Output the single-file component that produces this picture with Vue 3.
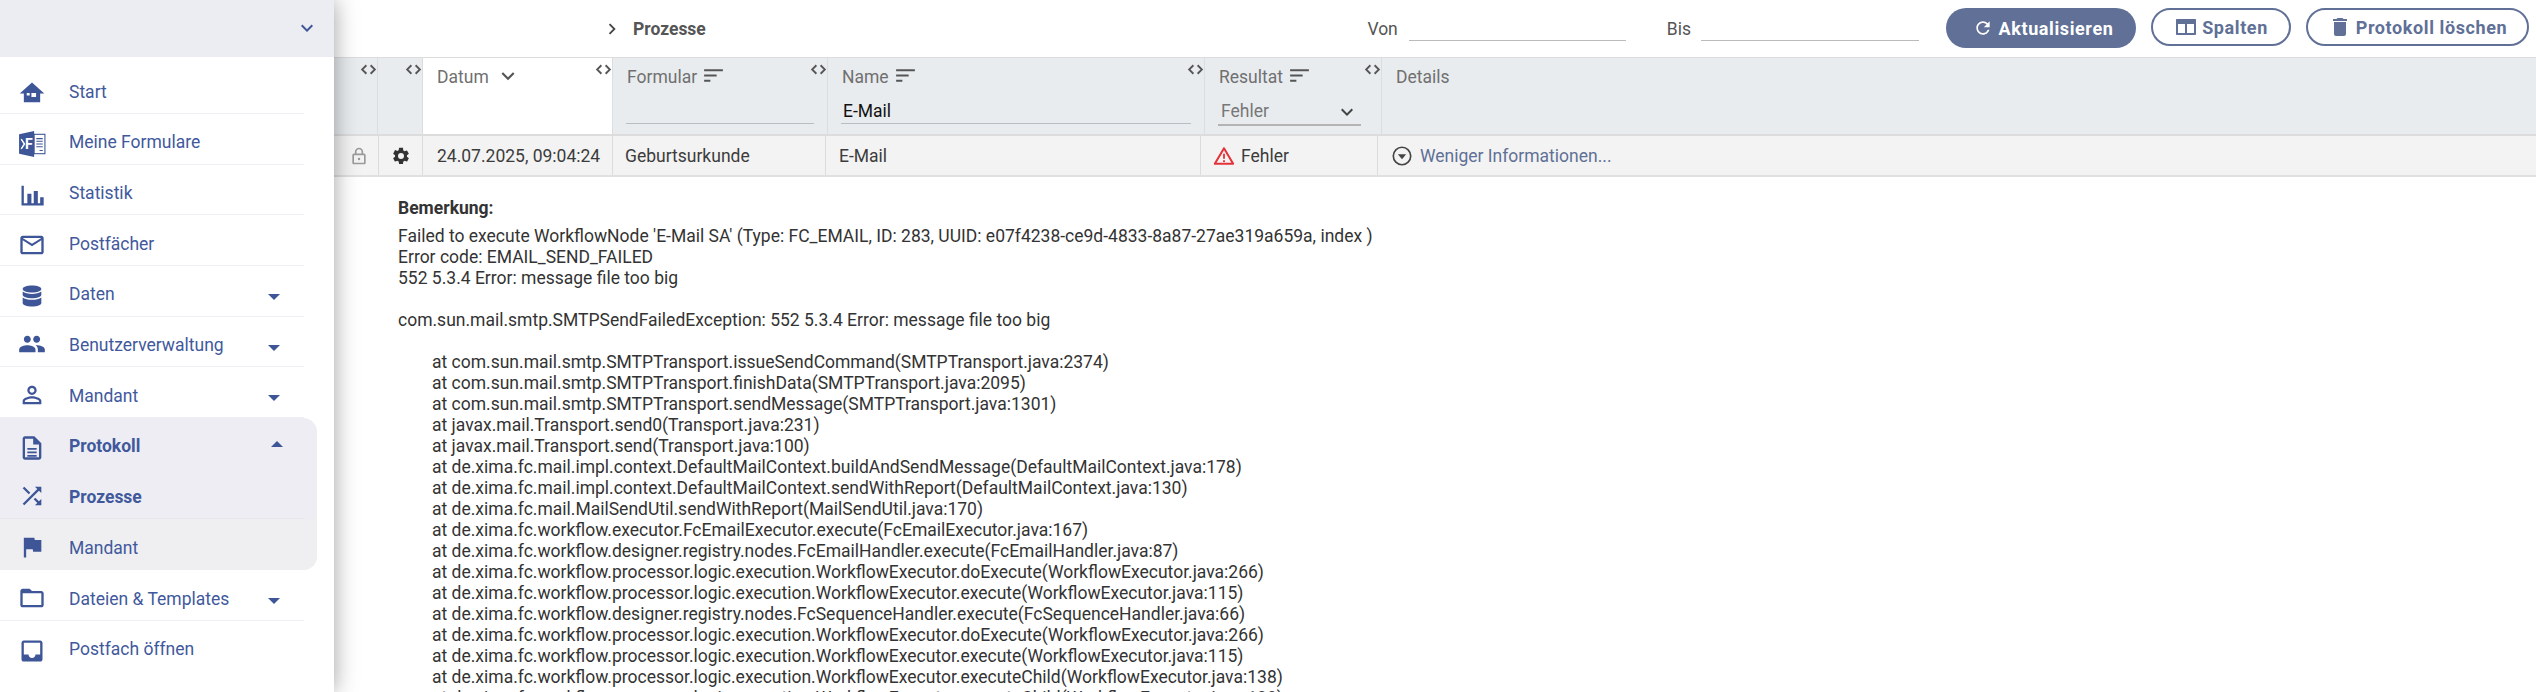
<script setup>
const P = {
  home: 'M12 3 1.500 12.500H5V20h5.200v-5.800H7.500V12h0H10v2.200h.2V20H19v-7.500h3.500zM11.500 12h4v3.500h-4z',
  chart: 'M3 4h2v17H3zM8 11h3.500v8H8zM13.500 8.500H17V19h-3.500zM19 14h3v5h-3zM3 19h19v2H3z',
  mail: 'M20 4H4c-1.100 0-2 .9-2 2v12c0 1.100.9 2 2 2h16c1.100 0 2-.9 2-2V6c0-1.100-.9-2-2-2zm0 14H4V8l8 5 8-5v10zm-8-7L4 6h16l-8 5z',
  db: 'M12 3c-4.400 0-8 1.300-8 3s3.600 3 8 3 8-1.300 8-3-3.600-3-8-3zM4 8.200V11c0 1.700 3.600 3 8 3s8-1.300 8-3V8.200c-1.700 1.400-4.800 2.100-8 2.100s-6.300-.7-8-2.100zM4 13.200V18c0 1.700 3.600 3 8 3s8-1.300 8-3v-4.800c-1.700 1.400-4.800 2.100-8 2.100s-6.300-.7-8-2.100z',
  people: 'M16 11c1.660 0 2.990-1.340 2.990-3S17.660 5 16 5c-1.660 0-3 1.340-3 3s1.340 3 3 3zm-8 0c1.660 0 2.990-1.340 2.990-3S9.660 5 8 5C6.340 5 5 6.340 5 8s1.340 3 3 3zm0 2c-2.330 0-7 1.170-7 3.500V19h14v-2.500c0-2.330-4.670-3.500-7-3.500zm8 0c-.29 0-.62.02-.97.05 1.160.84 1.970 1.970 1.970 3.450V19h6v-2.500c0-2.330-4.670-3.500-7-3.500z',
  person: 'M12 5.900c1.160 0 2.100.94 2.100 2.100s-.94 2.100-2.100 2.100S9.900 9.160 9.900 8s.94-2.100 2.100-2.100m0 9c2.970 0 6.100 1.460 6.100 2.100v1.100H5.900V17c0-.64 3.130-2.100 6.100-2.100M12 4C9.790 4 8 5.790 8 8s1.790 4 4 4 4-1.790 4-4-1.790-4-4-4zm0 9c-2.670 0-8 1.340-8 4v3h16v-3c0-2.660-5.330-4-8-4z',
  doc: 'M14 2H6c-1.100 0-2 .9-2 2v16c0 1.100.9 2 2 2h12c1.100 0 2-.9 2-2V8zm4 18H6V4h7v5h5zM8 12h8v1.500H8zM8 15h8v1.500H8zM8 18h8v1.500H8z',
  shuffle: 'M10.590 9.170 5.410 4 4 5.410l5.170 5.170 1.420-1.410zM14.500 4l2.040 2.040L4 18.590 5.410 20 17.960 7.460 20 9.500V4h-5.500zm.33 9.410-1.410 1.410 3.130 3.130L14.500 20H20v-5.500l-2.040 2.040-3.130-3.130z',
  flag: 'M14.400 6 14 4H5v17h2v-7h5.600l.4 2h7V6z',
  folder: 'M20 6h-8l-2-2H4c-1.100 0-1.990.9-1.990 2L2 18c0 1.100.9 2 2 2h16c1.100 0 2-.9 2-2V8c0-1.100-.9-2-2-2zm0 12H4V8h16v10z',
  inbox: 'M19 3H4.990c-1.110 0-1.980.89-1.980 2L3 19c0 1.100.88 2 1.990 2H19c1.100 0 2-.9 2-2V5c0-1.110-.9-2-2-2zm0 12h-4c0 1.660-1.350 3-3 3s-3-1.340-3-3H4.990V5H19v10z',
}
const topNav = [
  { label: 'Start', icon: P.home, low: true },
  { label: 'Meine Formulare', xima: true, low: true },
  { label: 'Statistik', icon: P.chart, low: true },
  { label: 'Postfächer', icon: P.mail, low: true },
  { label: 'Daten', icon: P.db, caret: true, low: true },
  { label: 'Benutzerverwaltung', icon: P.people, caret: true },
  { label: 'Mandant', icon: P.person, caret: true },
]
const bottomNav = [
  { label: 'Dateien & Templates', icon: P.folder, caret: true },
  { label: 'Postfach öffnen', icon: P.inbox, plain: true, low: true },
]
const chevron = 'M7.410 8.590 12 13.170l4.590-4.580L18 10l-6 6-6-6z'
const sortIcon = 'M3 18h6v-2H3zM3 6v2h18V6zm0 7h12v-2H3z'
const intro = [
  "Failed to execute WorkflowNode 'E-Mail SA' (Type: FC_EMAIL, ID: 283, UUID: e07f4238-ce9d-4833-8a87-27ae319a659a, index )",
  'Error code: EMAIL_SEND_FAILED',
  '552 5.3.4 Error: message file too big',
]
const stack = [
  'at com.sun.mail.smtp.SMTPTransport.issueSendCommand(SMTPTransport.java:2374)',
  'at com.sun.mail.smtp.SMTPTransport.finishData(SMTPTransport.java:2095)',
  'at com.sun.mail.smtp.SMTPTransport.sendMessage(SMTPTransport.java:1301)',
  'at javax.mail.Transport.send0(Transport.java:231)',
  'at javax.mail.Transport.send(Transport.java:100)',
  'at de.xima.fc.mail.impl.context.DefaultMailContext.buildAndSendMessage(DefaultMailContext.java:178)',
  'at de.xima.fc.mail.impl.context.DefaultMailContext.sendWithReport(DefaultMailContext.java:130)',
  'at de.xima.fc.mail.MailSendUtil.sendWithReport(MailSendUtil.java:170)',
  'at de.xima.fc.workflow.executor.FcEmailExecutor.execute(FcEmailExecutor.java:167)',
  'at de.xima.fc.workflow.designer.registry.nodes.FcEmailHandler.execute(FcEmailHandler.java:87)',
  'at de.xima.fc.workflow.processor.logic.execution.WorkflowExecutor.doExecute(WorkflowExecutor.java:266)',
  'at de.xima.fc.workflow.processor.logic.execution.WorkflowExecutor.execute(WorkflowExecutor.java:115)',
  'at de.xima.fc.workflow.designer.registry.nodes.FcSequenceHandler.execute(FcSequenceHandler.java:66)',
  'at de.xima.fc.workflow.processor.logic.execution.WorkflowExecutor.doExecute(WorkflowExecutor.java:266)',
  'at de.xima.fc.workflow.processor.logic.execution.WorkflowExecutor.execute(WorkflowExecutor.java:115)',
  'at de.xima.fc.workflow.processor.logic.execution.WorkflowExecutor.executeChild(WorkflowExecutor.java:138)',
  'at de.xima.fc.workflow.processor.logic.execution.WorkflowExecutor.executeChild(WorkflowExecutor.java:138)',
]
</script>

<template>
  <div class="page">
    <aside class="side">
      <div class="side-head">
        <svg class="head-chev" viewBox="0 0 24 24"><path :d="chevron" /></svg>
      </div>
      <nav class="nav">
        <a v-for="n in topNav" :key="n.label" class="item">
          <span class="ico" :class="{ low: n.low }">
            <svg v-if="n.xima" viewBox="0 0 26 26" class="xima">
              <path d="M1 4 15 1v24L1 22z" />
              <rect x="15" y="4" width="10" height="18" class="xb" />
              <path d="M17 8h6M17 10.500h6M17 13h6M17 15.500h6M20 19h3" class="xl" />
              <path d="M3 8.500 6 13 3 17.500" class="xw" />
              <text x="6.500" y="18" class="xt">F</text>
            </svg>
            <svg v-else viewBox="0 0 24 24"><path :d="n.icon" /></svg>
          </span>
          <span class="lbl">{{ n.label }}</span>
          <i v-if="n.caret" class="caret"></i>
        </a>
        <div class="group">
          <a class="item g1">
            <span class="ico low"><svg viewBox="0 0 24 24"><path :d="P.doc" /></svg></span>
            <span class="lbl strong">Protokoll</span>
            <i class="caret up"></i>
          </a>
          <a class="item g2">
            <span class="ico"><svg viewBox="0 0 24 24"><path :d="P.shuffle" /></svg></span>
            <span class="lbl strong">Prozesse</span>
          </a>
          <a class="item g3">
            <span class="ico"><svg viewBox="0 0 24 24"><path :d="P.flag" /></svg></span>
            <span class="lbl">Mandant</span>
          </a>
        </div>
        <a v-for="n in bottomNav" :key="n.label" class="item" :class="{ last: n.plain }">
          <span class="ico" :class="{ low: n.low }"><svg viewBox="0 0 24 24"><path :d="n.icon" /></svg></span>
          <span class="lbl">{{ n.label }}</span>
          <i v-if="n.caret" class="caret"></i>
        </a>
      </nav>
    </aside>

    <main class="main">
      <header class="top">
        <div class="crumb">
          <svg viewBox="0 0 24 24"><path d="M8.590 7.410 13.170 12l-4.580 4.590L10 18l6-6-6-6z" /></svg>
          <span>Prozesse</span>
        </div>
        <div class="dates">
          <span class="d-l">Von</span><span class="d-in first"></span>
          <span class="d-l bis">Bis</span><span class="d-in second"></span>
        </div>
        <div class="btns">
          <button class="btn fill">
            <svg viewBox="0 0 24 24"><path d="M17.650 6.350C16.200 4.900 14.210 4 12 4c-4.420 0-7.990 3.580-7.990 8s3.570 8 7.990 8c3.730 0 6.840-2.550 7.730-6h-2.080c-.82 2.330-3.040 4-5.650 4-3.310 0-6-2.690-6-6s2.690-6 6-6c1.660 0 3.140.69 4.220 1.780L13 11h7V4l-2.350 2.350z" /></svg>
            Aktualisieren
          </button>
          <button class="btn line spalten">
            <svg viewBox="0 0 24 24"><path d="M3 4h18c.6 0 1 .4 1 1v14c0 .6-.4 1-1 1H3c-.6 0-1-.4-1-1V5c0-.6.4-1 1-1zm1 5v9h7V9zm9 0v9h7V9z" /></svg>
            Spalten
          </button>
          <button class="btn line proto">
            <svg viewBox="0 0 24 24"><path d="M6 19c0 1.100.9 2 2 2h8c1.100 0 2-.9 2-2V7H6zM19 4h-3.500l-1-1h-5l-1 1H5v2h14z" /></svg>
            Protokoll löschen
          </button>
        </div>
      </header>

      <section class="thead">
        <div class="th c1"><svg class="rz" viewBox="0 0 16 12"><path d="M6 2 2 6l4 4M10 2l4 4-4 4" /></svg></div>
        <div class="th c2"><svg class="rz" viewBox="0 0 16 12"><path d="M6 2 2 6l4 4M10 2l4 4-4 4" /></svg></div>
        <div class="th c3 sorted">
          <div class="ttl">Datum <svg class="chv" viewBox="0 0 24 24"><path :d="chevron" /></svg></div>
          <svg class="rz" viewBox="0 0 16 12"><path d="M6 2 2 6l4 4M10 2l4 4-4 4" /></svg>
        </div>
        <div class="th c4">
          <div class="ttl">Formular <svg class="srt" viewBox="0 0 24 24"><path :d="sortIcon" /></svg></div>
          <div class="inp"></div>
          <svg class="rz" viewBox="0 0 16 12"><path d="M6 2 2 6l4 4M10 2l4 4-4 4" /></svg>
        </div>
        <div class="th c5">
          <div class="ttl">Name <svg class="srt" viewBox="0 0 24 24"><path :d="sortIcon" /></svg></div>
          <div class="inp email">E-Mail</div>
          <svg class="rz" viewBox="0 0 16 12"><path d="M6 2 2 6l4 4M10 2l4 4-4 4" /></svg>
        </div>
        <div class="th c6">
          <div class="ttl">Resultat <svg class="srt" viewBox="0 0 24 24"><path :d="sortIcon" /></svg></div>
          <div class="sel">Fehler <svg viewBox="0 0 24 24"><path :d="chevron" /></svg></div>
          <svg class="rz" viewBox="0 0 16 12"><path d="M6 2 2 6l4 4M10 2l4 4-4 4" /></svg>
        </div>
        <div class="th c7"><div class="ttl">Details</div></div>
      </section>

      <section class="row">
        <div class="td c-lock"><svg class="lock" viewBox="0 0 24 24"><path d="M12 2a5 5 0 0 0-5 5v2h2V7a3 3 0 0 1 6 0v2H6c-1.100 0-2 .9-2 2v9c0 1.100.9 2 2 2h12c1.100 0 2-.9 2-2v-9c0-1.100-.9-2-2-2h-1V7a5 5 0 0 0-5-5zM6 11h12v9H6zm6 3a1.500 1.500 0 1 0 0 3 1.500 1.500 0 0 0 0-3z" /></svg></div>
        <div class="td"><svg class="gear" viewBox="0 0 24 24"><path d="M19.140 12.940c.04-.3.06-.61.06-.94s-.02-.64-.07-.94l2.030-1.580a.49.49 0 0 0 .12-.61l-1.920-3.320a.49.49 0 0 0-.59-.22l-2.390.96a7 7 0 0 0-1.620-.94l-.36-2.540A.48.48 0 0 0 13.920 2h-3.840a.47.47 0 0 0-.47.41l-.36 2.540c-.59.24-1.130.56-1.620.94l-2.390-.96a.49.49 0 0 0-.59.22L2.730 8.870a.48.48 0 0 0 .12.61l2.030 1.580c-.05.3-.08.63-.08.94s.02.64.07.94l-2.030 1.580a.49.49 0 0 0-.12.61l1.920 3.320c.12.22.37.29.59.22l2.390-.96c.5.38 1.030.7 1.620.94l.36 2.540c.05.24.24.41.48.41h3.840c.24 0 .44-.17.47-.41l.36-2.540c.59-.24 1.130-.56 1.620-.94l2.390.96c.22.08.47 0 .59-.22l1.920-3.320a.48.48 0 0 0-.12-.61zM12 15.600a3.600 3.600 0 1 1 0-7.200 3.600 3.600 0 0 1 0 7.200z" /></svg></div>
        <div class="td txt date">24.07.2025, 09:04:24</div>
        <div class="td txt form">Geburtsurkunde</div>
        <div class="td txt">E-Mail</div>
        <div class="td txt res">
          <svg class="warn" viewBox="0 0 24 24"><path d="M12 3.500 2 20.500h20z" class="w-o" /><path d="M11 9.500h2V15h-2zM11 16.500h2v2h-2z" class="w-f" /></svg>
          Fehler
        </div>
        <div class="td txt det">
          <svg class="more" viewBox="0 0 24 24"><circle cx="12" cy="12" r="9.500" class="m-c" /><path d="M7.500 10h9L12 15.500z" class="m-t" /></svg>
          <span class="link">Weniger Informationen...</span>
        </div>
      </section>

      <section class="body">
        <div class="rem">Bemerkung:</div>
        <div v-for="l in intro" :key="l" class="ln">{{ l }}</div>
        <div class="ln gap">com.sun.mail.smtp.SMTPSendFailedException: 552 5.3.4 Error: message file too big</div>
        <div class="stack">
          <div v-for="(l, i) in stack" :key="i" class="ln">{{ l }}</div>
        </div>
      </section>
    </main>
  </div>
</template>

<style>
html, body { margin: 0; height: 692px; overflow: hidden; background: #fff; }
</style>

<style scoped>
.page { display: flex; width: 2536px; height: 692px; overflow: hidden; font-family: Roboto, "Liberation Sans", sans-serif; font-size: 17.5px; }
.side { position: relative; z-index: 2; flex: 0 0 334px; height: 692px; background: #fff; box-shadow: 0 0 22px rgba(0,0,0,.38); }
.side-head { height: 57px; background: #ecedf3; display: flex; justify-content: flex-end; align-items: center; padding-right: 15px; box-sizing: border-box; }
.head-chev { width: 24px; height: 24px; fill: #3f5797; margin-top: -2px; }
.nav { padding-top: 6.300px; }
.item { display: flex; align-items: center; height: 49.700px; width: 304px; border-bottom: 1px solid #eff0f3; color: #41599c; position: relative; }
.ico { flex: 0 0 69px; display: flex; justify-content: center; padding-right: 5px; box-sizing: border-box; margin-top: 5px; }
.ico.low { margin-top: 10px; }
.ico svg { width: 28px; height: 28px; fill: #3e5698; }
.lbl { margin-top: 7px; }
.strong { font-weight: 700; }
.caret { position: absolute; left: 268px; top: 28px; width: 0; height: 0; border-left: 6px solid transparent; border-right: 6px solid transparent; border-top: 6px solid #3e5698; }
.caret.up { left: 271px; top: 23px; border-top: 0; border-bottom: 6px solid #3e5698; }
.group { width: 317px; background: #ededf3; border-radius: 0 14px 14px 0; overflow: hidden; }
.group .item { border-bottom-color: transparent; }
.g2 { border-bottom-color: #e6e6ec !important; }
.g3 { background: #efeff1; height: 50.700px; border-bottom: 0; width: 317px; }
.last { border-bottom: 0; }
.xima .xb { fill: #fff; stroke: #3e5698; stroke-width: 1; }
.xima .xl { stroke: #3e5698; fill: none; stroke-width: 1; }
.xima .xw { stroke: #fff; fill: none; stroke-width: 1.400; }
.xima .xt { fill: #fff; font: 700 13px Roboto, sans-serif; }

.main { flex: 1; min-width: 0; }
.top { display: flex; align-items: center; height: 57px; border-bottom: 1px solid #dcdcdc; }
.crumb { display: flex; align-items: center; margin-left: 267px; margin-right: auto; color: #555; font-weight: 700; }
.crumb svg { width: 22px; height: 22px; fill: #444; margin-right: 10px; }
.dates { display: flex; align-items: center; color: #555; margin-right: 27px; }
.d-in { display: block; height: 1px; background: #bbb; margin-top: 24px; }
.d-in.first { width: 217px; margin-left: 11px; }
.d-in.second { width: 218px; margin-left: 10px; }
.bis { margin-left: 41px; }
.btns { display: flex; align-items: flex-start; margin-right: 7px; gap: 15px; height: 40px; margin-top: -1px; }
.btn { font-family: Roboto, sans-serif; font-size: 18px; letter-spacing: .6px; font-weight: 700; display: flex; align-items: center; justify-content: center; border-radius: 20px; box-sizing: border-box; padding: 0; }
.btn svg { width: 20px; height: 20px; }
.fill { width: 190px; height: 40px; background: #607096; border: 0; color: #fff; gap: 6px; padding-left: 4px; }
.fill svg { fill: #fff; }
.line { height: 38px; background: #fff; border: 2px solid #607096; color: #607096; }
.line svg { fill: #607096; width: 24px; height: 24px; margin-right: 4px; }
.spalten { width: 140px; }
.proto { width: 223px; }

.thead { display: grid; grid-template-columns: 44px 45px 190px 215px 377px 177px 1fr; background: #e9ecef; border-bottom: 2px solid #dcdcdc; height: 76px; }
.th { position: relative; border-right: 1px solid #dcdde0; color: #707070; box-sizing: border-box; padding: 0 13px 0 14px; }
.c7 { border-right: 0; }
.sorted { background: #fff; }
.rz { position: absolute; top: 5px; right: 0; width: 17px; height: 13px; fill: none; stroke: #555; stroke-width: 1.700; }
.ttl { display: flex; align-items: center; height: 20px; margin-top: 9px; gap: 4px; line-height: 20px; }
.srt { width: 25px; height: 25px; fill: #555; margin-top: -3px; }
.chv { width: 26px; height: 26px; fill: #555; margin-left: 2px; margin-top: -3px; }
.inp { position: absolute; left: 13px; right: 13px; top: 42px; height: 23px; border-bottom: 1px solid #b9bec4; color: #111; line-height: 22px; }
.email { padding-left: 2px; }
.sel { position: absolute; left: 13px; right: 20px; top: 42px; height: 24px; border-bottom: 2px solid #b4b4b4; color: #777; line-height: 22px; padding-left: 3px; }
.sel svg { position: absolute; right: 2px; top: 0; width: 24px; height: 24px; fill: #444; }

.row { display: grid; grid-template-columns: 45px 44px 190px 213px 375px 177px 1fr; background: #f3f3f3; border-bottom: 2px solid #e0e0e0; height: 39px; align-items: stretch; }
.td { display: flex; align-items: center; justify-content: center; border-right: 1px solid #dcdcdc; color: #3c3c3c; padding-top: 1px; }
.c-lock { padding-left: 5px; }
.td.txt { justify-content: flex-start; padding-left: 13px; }
.td.date { padding-left: 14px; }
.td.form { padding-left: 12px; }
.td:last-child { border-right: 0; }
.lock { width: 20px; height: 20px; fill: #9a9a9a; }
.gear { width: 20px; height: 20px; fill: #333; }
.res { gap: 6px; }
.warn { width: 22px; height: 22px; margin-left: -1px; }
.w-o { fill: none; stroke: #e53238; stroke-width: 2.200; stroke-linejoin: round; }
.w-f { fill: #e53238; }
.more { width: 22px; height: 22px; margin-right: 7px; }
.m-c { fill: none; stroke: #444; stroke-width: 1.800; }
.m-t { fill: #444; }
.link { color: #607096; }

.body { padding: 21px 0 0 64px; color: #333; line-height: 21px; }
.rem { font-weight: 700; margin-bottom: 7px; }
.ln { height: 21px; white-space: nowrap; }
.gap { margin-top: 21px; }
.stack { margin-top: 21px; padding-left: 34px; }
</style>
